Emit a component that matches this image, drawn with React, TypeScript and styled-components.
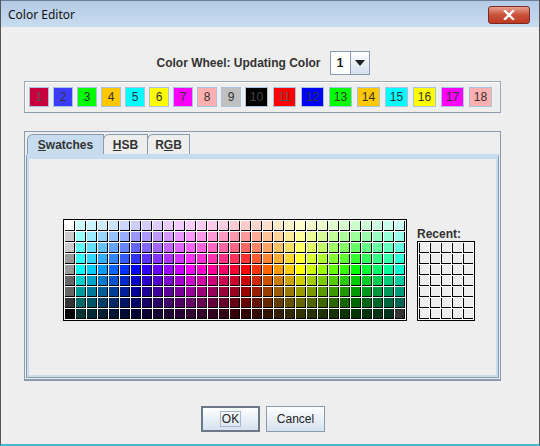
import React from "react";
import styled, { createGlobalStyle } from "styled-components";

const Global = createGlobalStyle`
  html, body { margin: 0; padding: 0; background: #eeeeee; }
  body { font-family: "Liberation Sans", Arial, sans-serif; font-size: 12px; color: #333; }
  * { box-sizing: border-box; }
`;

const Window = styled.div`
  width: 540px; height: 446px; display: flex; flex-direction: column;
  background: #eeeeee; border-left: 1px solid #555; border-right: 1px solid #555;
  border-bottom: 2px solid #4cb8d0;
`;
const TitleBar = styled.div`
  height: 27px; flex: none; display: flex; align-items: center; justify-content: space-between;
  padding: 0 9px 0 7px; background: linear-gradient(#b4cbe6, #c8dcf0);
  border-top: 1px solid #6a7e96; font-family: "Noto Sans", "Liberation Sans", sans-serif; font-size: 12px; color: #111;
`;
const CloseBtn = styled.div`
  width: 42px; height: 18px; border-radius: 3px; border: 1px solid #7a2a20;
  background: linear-gradient(#e8a090, #c8503a 50%, #c03820);
  display: flex; align-items: center; justify-content: center; margin-top: 2px;
`;
const Body = styled.div`
  flex: 1; display: flex; flex-direction: column; align-items: center;
`;
const HeaderRow = styled.div`
  margin-top: 24px; height: 24px; display: flex; align-items: center; gap: 9px; margin-right: 14px;
`;
const Label = styled.span`
  font-weight: bold; font-size: 12px; color: #333;
`;
const Combo = styled.div`
  width: 40px; height: 24px; display: flex; border: 1px solid #8a9ab0; background: #fff;
`;
const ComboValue = styled.div`
  flex: 1; display: flex; align-items: center; justify-content: center; font-weight: bold; color: #222;
  border-right: 1px solid #8a9ab0;
`;
const ComboArrow = styled.div`
  width: 18px; display: flex; align-items: center; justify-content: center;
  background: linear-gradient(#fff, #d4e0ee);
`;
const ColorRow = styled.div`
  margin-top: 6px; align-self: flex-start; margin-left: 23px;
  width: 477px; height: 32px; border: 1px solid #9aa8b8; border-bottom-color: #8a98aa;
  display: flex; align-items: center; padding-left: 4px;
  box-shadow: inset 1px 1px 0 #fff;
`;
const ColorBtn = styled.div<{ $c: string; $w: number; $gap: number; $fg: string }>`
  width: ${p => p.$w}px; height: 20px; margin-right: ${p => p.$gap}px; background: ${p => p.$c};
  border: 1px solid #a8c4dc; color: ${p => p.$fg}; font-size: 12px;
  display: flex; align-items: center; justify-content: center;
`;
const Tabbed = styled.div`
  margin-top: 18px; align-self: flex-start; margin-left: 23px;
  width: 477px; height: 250px; border: 1px solid #8a9ab0; border-bottom: 2px solid #8a9ab0;
  padding: 2px 1px 1px 1px; display: flex; flex-direction: column;
`;
const Tabs = styled.div`
  display: flex; height: 20px; padding-left: 1px;
`;
const Tab = styled.div<{ $active?: boolean; $w: number }>`
  width: ${p => p.$w}px; height: 20px; border: 1px solid #8a9ab0; border-bottom: none; margin-right: -1px;
  background: ${p => (p.$active ? "#c8dcf0" : "#eeeeee")}; border-top-left-radius: 6px;
  display: flex; align-items: center; justify-content: center; font-weight: bold; color: #333;
  u { text-decoration: underline; }
`;
const Content = styled.div`
  flex: 1; border: 1px solid #8a9ab0; border-top: 3px solid #c8dcf0;
  box-shadow: inset 0 0 0 2px #c8dcf0; padding: 62px 0 0 36px; display: flex; align-items: flex-start; gap: 10px;
`;
const Grid = styled.div`
  display: grid; grid-template-columns: repeat(31, 10px); grid-auto-rows: 10px; gap: 1px;
  padding: 1px; background: #fff; border: 1px solid #000;
`;
const Swatch = styled.div`
  border-right: 1px solid #000; border-bottom: 1px solid #000;
`;
const RecentCol = styled.div`
  display: flex; flex-direction: column; margin-top: 8px;
`;
const RecentLabel = styled.div`
  font-weight: bold; color: #333; height: 14px;
`;
const RecentGrid = styled.div`
  display: grid; grid-template-columns: repeat(5, 10px); grid-auto-rows: 10px; gap: 1px;
  padding: 1px; background: #fff; border: 1px solid #000;
`;
const RecentCell = styled.div`
  background: #eeeeee; border-left: 1px solid #000; border-bottom: 1px solid #000;
`;
const Buttons = styled.div`
  margin-top: 25px; display: flex; gap: 6px; margin-right: 14px;
`;
const Button = styled.div<{ $def?: boolean }>`
  width: 59px; height: 26px; border: ${p => (p.$def ? "2px solid #6a7888" : "1px solid #8a9ab0")};
  background: linear-gradient(#fdfeff, #d6e2f0); display: flex; align-items: center; justify-content: center;
  font-size: 12px; color: #222;
`;
const OkFocus = styled.span`
  border: 1px solid #a8b8cc; padding: 0 1px;
`;

const palette = [
  "#c8003c","#3c3cff","#00ff00","#ffc800","#00ffff","#ffff00","#ff00ff","#ffafaf","#c0c0c0",
  "#000000","#ff0000","#0000ff","#00ff00","#ffc800","#00ffff","#ffff00","#ff00ff","#ffafaf",
];

function hueRgb(h: number): number[] {
  const f = (n: number) => {
    const k = (n + h / 60) % 6;
    return 255 * (1 - Math.max(0, Math.min(k, 4 - k, 1)));
  };
  return [f(5), f(3), f(1)];
}
const grays = [255, 204, 204, 153, 153, 102, 102, 51, 0];
function swatchColor(r: number, c: number): string {
  if (c === 0) return `rgb(${grays[r]},${grays[r]},${grays[r]})`;
  if (r === 8 && c === 30) return "#333333";
  const base = hueRgb((180 + (c - 1) * 12) % 360);
  let rgb: number[];
  if (r < 4) {
    const t = (4 - r) * 0.2;
    rgb = base.map(v => v + (255 - v) * t);
  } else {
    const f = (9 - r) * 0.2;
    rgb = base.map(v => v * f);
  }
  return `rgb(${rgb.map(v => Math.round(v)).join(",")})`;
}

export default function App() {
  const swatches: React.ReactNode[] = [];
  for (let r = 0; r < 9; r++)
    for (let c = 0; c < 31; c++)
      swatches.push(<Swatch key={`${r}-${c}`} style={{ background: swatchColor(r, c) }} />);
  return (
    <>
      <Global />
      <Window>
        <TitleBar>
          <span>Color Editor</span>
          <CloseBtn>
            <svg width="12" height="10" viewBox="0 0 12 10">
              <path d="M2 1 L10 9 M10 1 L2 9" stroke="#fff" strokeWidth="2.4" strokeLinecap="square" />
            </svg>
          </CloseBtn>
        </TitleBar>
        <Body>
          <HeaderRow>
            <Label>Color Wheel: Updating Color</Label>
            <Combo>
              <ComboValue>1</ComboValue>
              <ComboArrow>
                <svg width="10" height="6" viewBox="0 0 10 6"><path d="M0 0 H10 L5 6 Z" fill="#222" /></svg>
              </ComboArrow>
            </Combo>
          </HeaderRow>
          <ColorRow>
            {palette.map((c, i) => (
              <ColorBtn key={i} $c={c} $w={i < 9 ? 20 : 23} $gap={i < 9 ? 4 : 5}
                $fg={i === 9 ? "#444" : i === 0 || i === 10 ? "#555" : "#333"}>
                {i + 1}
              </ColorBtn>
            ))}
          </ColorRow>
          <Tabbed>
            <Tabs>
              <Tab $active $w={77}><span><u>S</u>watches</span></Tab>
              <Tab $w={45}><span><u>H</u>SB</span></Tab>
              <Tab $w={43}><span>R<u>G</u>B</span></Tab>
            </Tabs>
            <Content>
              <Grid>{swatches}</Grid>
              <RecentCol>
                <RecentLabel>Recent:</RecentLabel>
                <RecentGrid>
                  {Array.from({ length: 35 }, (_, i) => <RecentCell key={i} />)}
                </RecentGrid>
              </RecentCol>
            </Content>
          </Tabbed>
          <Buttons>
            <Button $def><OkFocus>OK</OkFocus></Button>
            <Button>Cancel</Button>
          </Buttons>
        </Body>
      </Window>
    </>
  );
}
